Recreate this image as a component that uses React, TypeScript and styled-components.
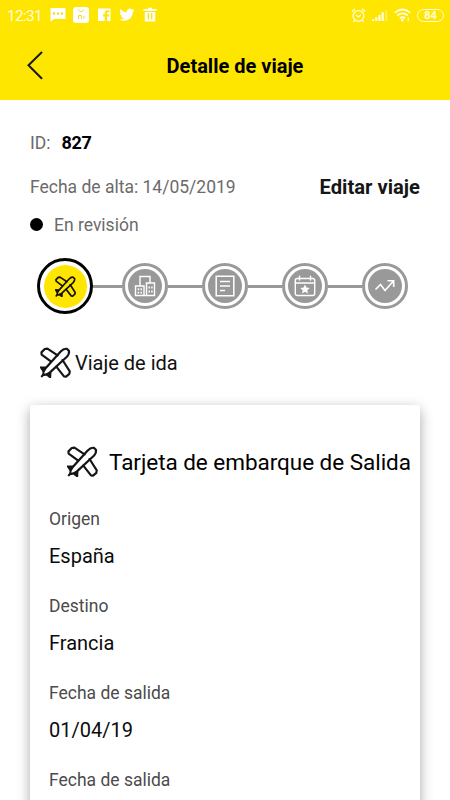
import React from "react";
import styled, { createGlobalStyle } from "styled-components";

const GlobalStyle = createGlobalStyle`
  * { box-sizing: border-box; }
  body { margin: 0; background: #fff; overflow: hidden; }
`;

const Screen = styled.div`
  width: 450px;
  height: 800px;
  overflow: hidden;
  display: flex;
  flex-direction: column;
  background: #fff;
  color: #000;
  font-family: Roboto, sans-serif;
`;

const StatusBar = styled.div`
  height: 32px;
  flex: none;
  display: flex;
  align-items: center;
  justify-content: space-between;
  padding: 0 6px 2px 7px;
  background: #ffe600;
  color: #fffce0;
`;

const StatusGroup = styled.div<{ $gap: number }>`
  display: flex;
  align-items: center;
  gap: ${(p) => p.$gap}px;
`;

const Clock = styled.span`
  width: 36px;
  padding-top: 1px;
  font-size: 15.5px;
  line-height: 20px;
  letter-spacing: -0.7px;
  white-space: nowrap;
`;

const Header = styled.header`
  height: 68px;
  flex: none;
  display: grid;
  grid-template-columns: 60px 1fr 60px;
  align-items: center;
  background: #ffe600;
`;

const BackButton = styled.button`
  height: 34px;
  border: 0;
  padding: 2px 0 0 26px;
  background: none;
  display: flex;
`;

const Title = styled.h1`
  margin: 0 0 0 20px;
  justify-self: center;
  font-size: 20px;
  font-weight: 700;
  line-height: 24px;
  white-space: nowrap;
`;

const Content = styled.main`
  flex: 1;
  min-height: 0;
  padding: 30px 30px 0;
  display: flex;
  flex-direction: column;
`;

const InfoRow = styled.div<{ $height: number; $top?: number }>`
  flex: none;
  height: ${(p) => p.$height}px;
  margin-top: ${(p) => p.$top ?? 0}px;
  display: flex;
  align-items: center;
  white-space: nowrap;
  font-size: 17.5px;
  color: #6b6b6b;
`;

const IdValue = styled.strong`
  margin: -1px 0 0 11px;
  font-size: 18px;
  letter-spacing: -0.3px;
  color: #000;
`;

const EditLink = styled.a`
  margin: -1px 0 0 auto;
  font-size: 20.2px;
  font-weight: 700;
  color: #161616;
`;

const Dot = styled.span`
  width: 13px;
  height: 13px;
  margin: -2px 11px 0 0;
  border-radius: 50%;
  background: #000;
`;

const Stepper = styled.div`
  flex: none;
  height: 56px;
  margin: 20px 12px 0 7px;
  display: flex;
  align-items: center;
`;

const Step = styled.div<{ $active?: boolean }>`
  flex: none;
  width: ${(p) => (p.$active ? 56 : 46)}px;
  height: ${(p) => (p.$active ? 56 : 46)}px;
  padding: ${(p) => (p.$active ? 3.5 : 3)}px;
  border: ${(p) => (p.$active ? "3px solid #000" : "3px solid #999")};
  border-radius: 50%;
`;

const StepFill = styled.div<{ $active?: boolean }>`
  width: 100%;
  height: 100%;
  border-radius: 50%;
  background: ${(p) => (p.$active ? "#ffe600" : "#999")};
  display: flex;
  align-items: center;
  justify-content: center;
`;

const Connector = styled.div<{ $first?: boolean }>`
  flex: none;
  width: ${(p) => (p.$first ? 29 : 34)}px;
  height: 3px;
  background: #999;
`;

const SectionTitle = styled.h2`
  flex: none;
  height: 32px;
  margin: 32px 0 0 10px;
  display: flex;
  align-items: center;
  gap: 4px;
  font-size: 20px;
  font-weight: 400;
  color: #111;
`;

const Label = styled.span`
  padding-top: 2px;
`;

const Card = styled.section`
  flex: none;
  height: 420px;
  margin-top: 27px;
  padding: 38px 0 0 19px;
  border-radius: 3px;
  background: #fff;
  box-shadow: 0 4px 13px rgba(0, 0, 0, 0.34);
`;

const CardTitle = styled.h3`
  height: 36px;
  margin: 0 0 26px 18px;
  display: flex;
  align-items: center;
  gap: 11px;
  font-size: 22.5px;
  letter-spacing: -0.04px;
  font-weight: 400;
  white-space: nowrap;
`;

const Field = styled.div`
  height: 87px;
`;

const FieldLabel = styled.div`
  height: 28px;
  font-size: 17.5px;
  line-height: 28px;
  color: #4b4b4b;
`;

const FieldValue = styled.div`
  margin-top: 8px;
  height: 30px;
  font-size: 20px;
  line-height: 30px;
  color: #0b0b0b;
`;

const PlaneIcon = ({ size, stroke = 2.1, color = "#151515" }: { size: number; stroke?: number; color?: string }) => (
  <svg width={size} height={size} viewBox="0 0 30 30" fill="none" stroke={color} strokeWidth={stroke} strokeLinejoin="round" strokeLinecap="round">
    <path d="M10.5 14 1.6 7.3 1.4 5.2 4.6 1.9 7.2 1.6 17 8.2" />
    <path d="M21.8 12.6 28.8 23.6 28.4 26 25.2 28.7 23.2 28.4 15.8 19" />
    <path d="M3.2 26.8Q2.8 23.6 5.4 20.6L19.8 4.6Q23 1.2 26 1.8L28 3.6Q28.6 6.6 26 9.4L9.4 24.8Q6 27.5 3.2 26.8Z" />
    <path d="M.9 19.8 5.2 20 3.2 23.2ZM10 25 9.8 29.2 6.4 26.6ZM3.2 26.8 1.8 28.3" fill={color} />
  </svg>
);

const BuildingsIcon = () => (
  <svg width="22" height="22" viewBox="0 0 22 22" fill="none" stroke="#fff" strokeWidth="1.4">
    <path d="M6 10.5V1.5H16V7.5M1.5 11H10V20.5H1.5ZM12.5 8H20.5V20.5H12.5ZM10 20.5H12.5" />
    <path d="M4.4 13.3V15.3M7.2 13.3V15.3M4.4 16.8V18.5M7.2 16.8V18.5M15.2 11.5V13.5M17.9 11.5V13.5M15.2 15.5V17.5M17.9 15.5V17.5" strokeWidth="1.5" />
  </svg>
);

const DocumentIcon = () => (
  <svg width="20" height="22" viewBox="0 0 20 22" fill="none" stroke="#fff" strokeWidth="1.5">
    <path d="M1.2 1.2H18.8V20.8H1.2ZM5 6.5H15M5 11H15M5 15.5H10" />
  </svg>
);

const CalendarIcon = () => (
  <svg width="22" height="22" viewBox="0 0 22 22" fill="none" stroke="#fff" strokeWidth="1.4" strokeLinecap="round">
    <rect x="1.3" y="3.5" width="19.4" height="17" rx="2" />
    <path d="M1.3 8H20.7M5.5 1.2V5M16.5 1.2V5" />
    <path d="m11 9.6 1.4 3 3.3.4-2.4 2.2.7 3.3-3-1.7-3 1.7.7-3.3-2.4-2.2 3.3-.4Z" fill="#fff" stroke="none" />
  </svg>
);

const TrendIcon = () => (
  <svg width="22" height="14" viewBox="0 0 22 14" fill="none" stroke="#fff" strokeWidth="1.6">
    <path d="M1.5 10.5 6.5 5.5 11 11.5 19.5 2M13.5 1.8H19.7V8" />
  </svg>
);

const NotificationIcons = () => (
  <svg width="110" height="18" viewBox="0 0 110 18" fill="#fff">
    <path d="M.5 2H15.5V13H4L.5 16Z" />
    <path d="M3 6.5h2v2H3zm4 0h2v2H7zm4 0h2v2h-2z" fill="#f0d800" />
    <rect x="23" y="1" width="16" height="16" rx="3" />
    <path d="M28 3.5Q31 8 34 3.5M28.5 13V9.5H31.5V13M34 9.5V13" fill="none" stroke="#efdc3a" strokeWidth="1" />
    <path d="M48 2.5H60.5V15H57V10.5H59L59.3 8.5H57V7.2Q57 6.2 58 6.2H59.4V4.3H57.4Q54.7 4.3 54.7 7V8.5H53V10.5H54.7V15H48Z" />
    <path transform="translate(69.3 1.1) scale(.63)" d="M23.95 4.57a10 10 0 0 1-2.82.77 4.96 4.96 0 0 0 2.16-2.72c-.95.55-2 .95-3.12 1.18a4.92 4.92 0 0 0-8.38 4.48C7.69 8.1 4.07 6.13 1.64 3.16a4.92 4.92 0 0 0 1.52 6.57 4.9 4.9 0 0 1-2.23-.61v.06a4.92 4.92 0 0 0 3.95 4.83 5 5 0 0 1-2.21.08 4.94 4.94 0 0 0 4.6 3.42A9.87 9.87 0 0 1 0 19.54a13.99 13.99 0 0 0 7.56 2.21c9.05 0 14-7.5 14-13.98 0-.21 0-.42-.02-.63a9.94 9.94 0 0 0 2.41-2.57Z" />
    <path d="M93.5 3H98V1.8H102V3H106.5V5H93.5ZM94.8 6H105.2V15.5H94.8Z" />
    <path d="M98.3 7V13.5M101.7 7V13.5" stroke="#ffe600" strokeWidth="1.4" />
  </svg>
);

const AlarmIcon = () => (
  <svg width="15" height="15" viewBox="0 0 15 15" fill="none" stroke="currentColor" strokeWidth="1.3">
    <circle cx="7.5" cy="8" r="5.4" />
    <path d="M.8 3.5 4 1M14.2 3.5 11 1M4.7 6.8 7.3 9 10 6.8M3.8 12 2.5 14M11.2 12 12.5 14" />
  </svg>
);

const SignalIcon = () => (
  <svg width="16" height="13" viewBox="0 0 16 13" fill="currentColor">
    <path d="M0 10.2h2.2V12H0zM3.2 8.3h2.2V12H3.2zM6.4 5.8h2.2V12H6.4zM9.6 3.3h2.2V12H9.6z" />
    <path d="M13.4 1h1.8v11h-1.8z" opacity=".5" />
  </svg>
);

const WifiIcon = () => (
  <svg width="17" height="14" viewBox="0 0 17 14" fill="none" stroke="currentColor" strokeWidth="1.8">
    <path d="M.8 4.7Q8.5-1.8 16.2 4.7M3.3 7.5Q8.5 3.2 13.7 7.5M5.8 10.2Q8.5 8 11.2 10.2" />
    <circle cx="8.3" cy="12" r=".6" fill="currentColor" />
    <path d="M14.3 9.5v3.5" strokeWidth="1.3" />
  </svg>
);

const Battery = styled.div`
  width: 27px;
  height: 13px;
  padding-top: 1px;
  border: 1.5px solid #fffce0;
  border-radius: 7px;
  display: flex;
  align-items: center;
  justify-content: center;
  font-size: 11px;
  line-height: 10px;
  font-weight: 700;
`;

const fields = [
  { label: "Origen", value: "España" },
  { label: "Destino", value: "Francia" },
  { label: "Fecha de salida", value: "01/04/19" },
  { label: "Fecha de salida", value: "" },
];

const steps = [
  <PlaneIcon key="plane" size={21} stroke={2.4} color="#15130a" />,
  <BuildingsIcon key="buildings" />,
  <DocumentIcon key="document" />,
  <CalendarIcon key="calendar" />,
  <TrendIcon key="trend" />,
];

export default function App() {
  return (
    <Screen>
      <GlobalStyle />
      <StatusBar>
        <StatusGroup $gap={7}>
          <Clock>12:31</Clock>
          <NotificationIcons />
        </StatusGroup>
        <StatusGroup $gap={6}>
          <AlarmIcon />
          <SignalIcon />
          <WifiIcon />
          <Battery>84</Battery>
        </StatusGroup>
      </StatusBar>
      <Header>
        <BackButton aria-label="Volver">
          <svg width="18" height="30" viewBox="0 0 18 30" fill="none" stroke="#17171f" strokeWidth="2" strokeLinecap="round">
            <path d="M15.5 1.5 2.5 14.2 15.5 27.2" />
          </svg>
        </BackButton>
        <Title>Detalle de viaje</Title>
      </Header>
      <Content>
        <InfoRow $height={26}>
          ID:<IdValue>827</IdValue>
        </InfoRow>
        <InfoRow $height={28} $top={17}>
          Fecha de alta: 14/05/2019
          <EditLink>Editar viaje</EditLink>
        </InfoRow>
        <InfoRow $height={26} $top={11}>
          <Dot />
          En revisión
        </InfoRow>
        <Stepper>
          {steps.map((icon, i) => (
            <React.Fragment key={i}>
              {i > 0 && <Connector $first={i === 1} />}
              <Step $active={i === 0}>
                <StepFill $active={i === 0}>{icon}</StepFill>
              </Step>
            </React.Fragment>
          ))}
        </Stepper>
        <SectionTitle>
          <PlaneIcon size={31} />
          <Label>Viaje de ida</Label>
        </SectionTitle>
        <Card>
          <CardTitle>
            <PlaneIcon size={31} />
            <Label>Tarjeta de embarque de Salida</Label>
          </CardTitle>
          {fields.map((f, i) => (
            <Field key={i}>
              <FieldLabel>{f.label}</FieldLabel>
              <FieldValue>{f.value}</FieldValue>
            </Field>
          ))}
        </Card>
      </Content>
    </Screen>
  );
}
